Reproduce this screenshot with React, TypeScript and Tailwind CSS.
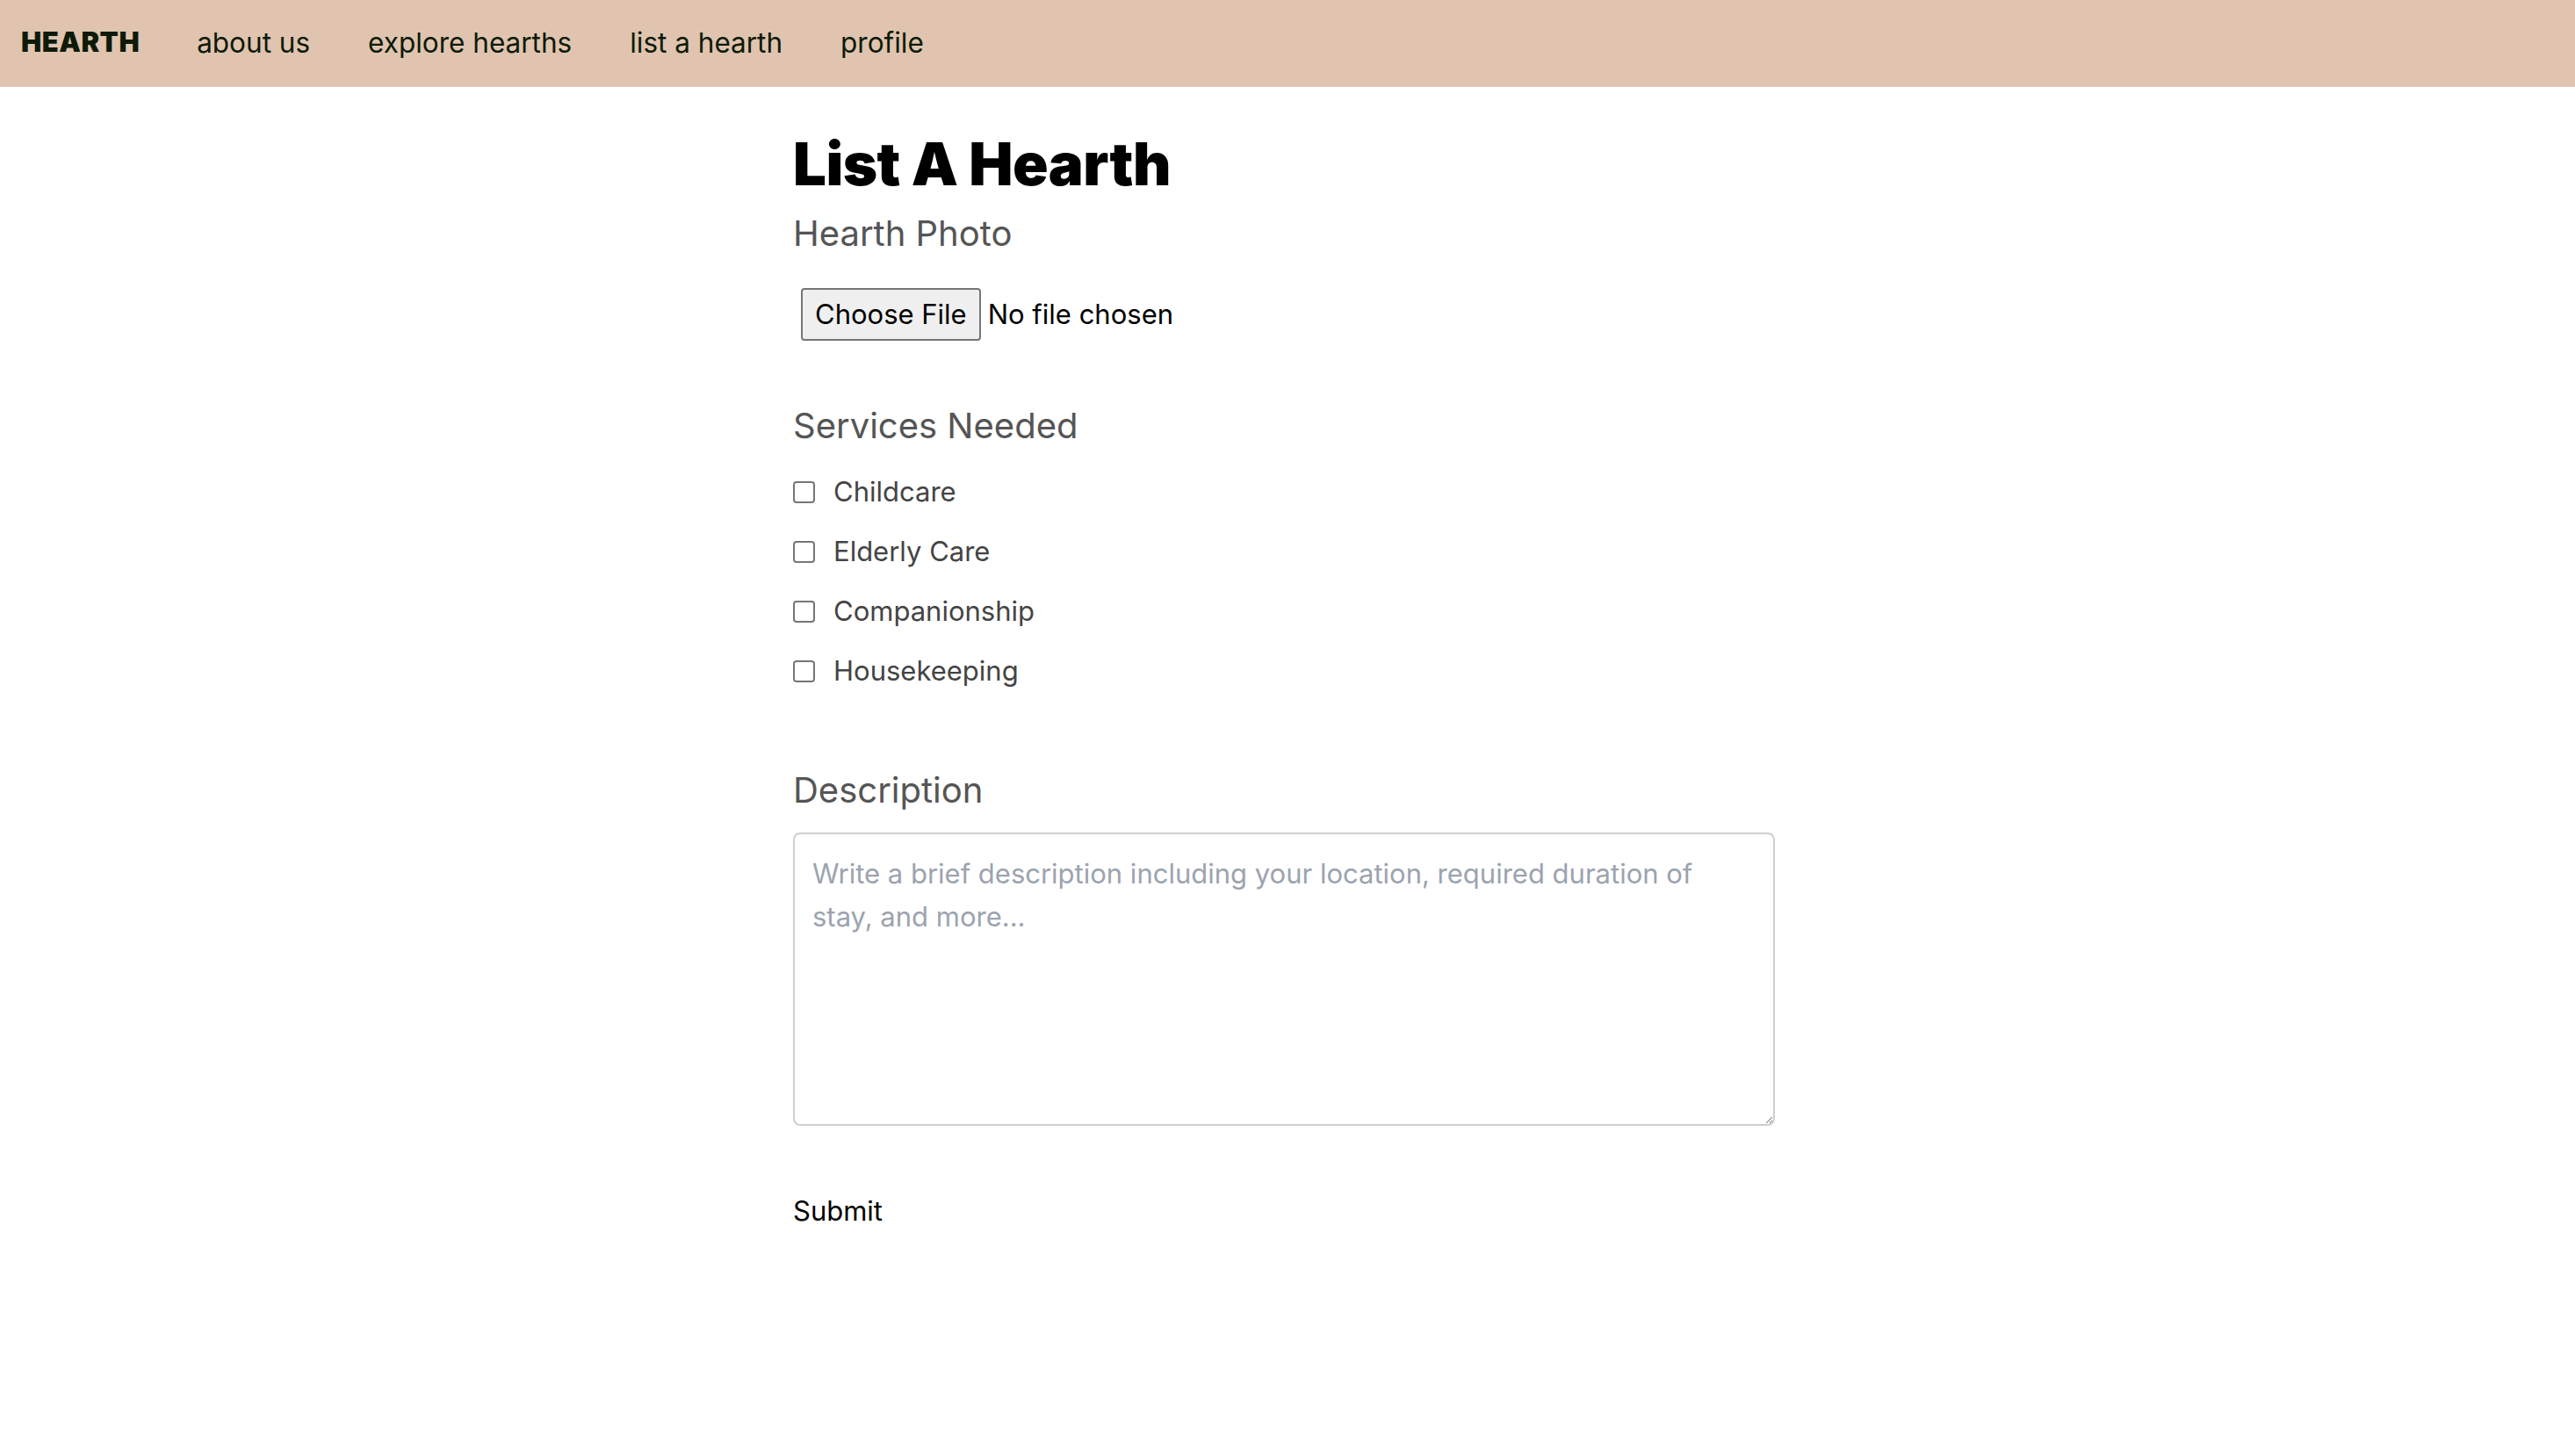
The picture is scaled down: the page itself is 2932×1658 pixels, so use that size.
const services = ["Childcare", "Elderly Care", "Companionship", "Housekeeping"];
const navLinks = ["about us", "explore hearths", "list a hearth", "profile"];

export default function App() {
  return (
    <div className="min-h-screen bg-white font-['Inter','Noto_Sans',sans-serif]">
      <nav className="flex h-[99px] items-center bg-[#e0c4af] pb-[2px] pl-[24px] text-[#0e1a08]">
        <span className="mr-[65px] text-[31px] font-black tracking-[0.5px]">HEARTH</span>
        <div className="flex gap-[66px] text-[31.5px]">
          {navLinks.map((l) => (
            <a key={l} href="#" className="leading-none">
              {l}
            </a>
          ))}
        </div>
      </nav>

      <div className="pr-[8px]">
        <main className="mx-auto w-[1118px] pt-[54px]">
          <h1 className="text-[67px] font-black leading-none tracking-[-0.5px] text-black">List A Hearth</h1>

          <h2 className="mt-[21px] text-[40px] leading-tight text-[#555]">Hearth Photo</h2>
          <div className="mt-[37px] flex items-center pl-[9px]">
            <button className="h-[60px] rounded-[4px] border-2 border-[#767676] bg-[#efefef] px-[14px] text-[31px] text-black">
              Choose File
            </button>
            <span className="ml-[8px] text-[31px] text-black">No file chosen</span>
          </div>

          <h2 className="mt-[72px] text-[40px] leading-tight text-[#555]">Services Needed</h2>
          <div className="mt-[35px] flex flex-col gap-[38px]">
            {services.map((s) => (
              <label key={s} className="flex items-center gap-[21px] text-[31px] leading-[30px] text-[#444]">
                <input
                  type="checkbox"
                  className="h-[25px] w-[25px] shrink-0 appearance-none rounded-[4px] border-2 border-[#767676] bg-white"
                />
                {s}
              </label>
            ))}
          </div>

          <h2 className="mt-[96px] text-[40px] leading-tight text-[#555]">Description</h2>
          <textarea
            className="mt-[23px] block h-[334px] w-full rounded-[8px] border-2 border-[#cfcfcf] px-[20px] pb-[14px] pt-[20px] text-[31px] leading-[49px] text-[#333] placeholder:text-[#9ca3af] outline-none"
            placeholder="Write a brief description including your location, required duration of stay, and more..."
          />

          <button className="mt-[74px] block text-[31px] text-black">Submit</button>
        </main>
      </div>
    </div>
  );
}
